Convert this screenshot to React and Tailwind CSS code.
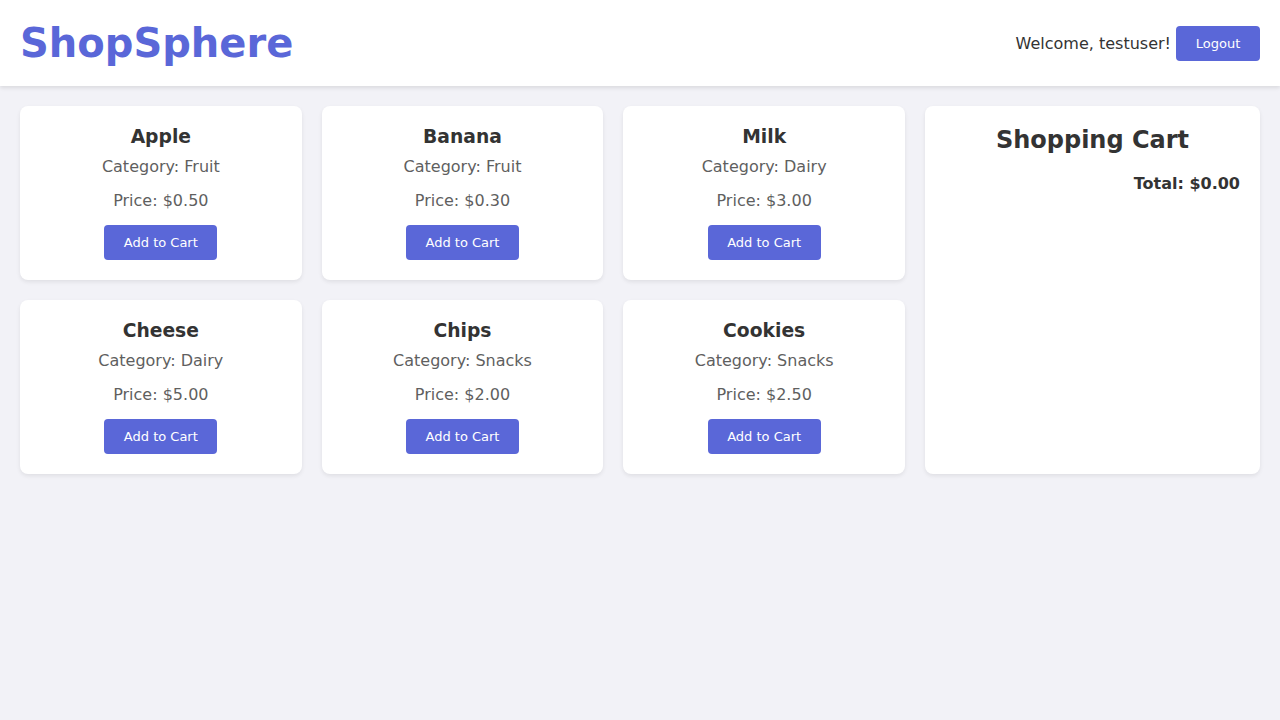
export default function App() {
  const products = [
    { name: "Apple", cat: "Fruit", price: "0.50" },
    { name: "Banana", cat: "Fruit", price: "0.30" },
    { name: "Milk", cat: "Dairy", price: "3.00" },
    { name: "Cheese", cat: "Dairy", price: "5.00" },
    { name: "Chips", cat: "Snacks", price: "2.00" },
    { name: "Cookies", cat: "Snacks", price: "2.50" },
  ];
  return (
    <div className="min-h-[720px] bg-[#f2f2f7] text-[#333]" style={{ fontFamily: '"DejaVu Sans", sans-serif' }}>
      <header className="h-[86px] bg-white flex items-center justify-between px-5 shadow-[0_2px_4px_rgba(0,0,0,0.1)]">
        <h1 className="text-[40px] leading-[48px] font-bold text-[#5a67d8]">ShopSphere</h1>
        <div className="flex items-center gap-[5px]">
          <span className="text-[16px] leading-[20px] pt-[1px]">Welcome, testuser!</span>
          <button className="h-[35px] w-[84px] pt-[2px] rounded-[4px] bg-[#5a67d8] text-white text-[13px]">Logout</button>
        </div>
      </header>
      <main className="flex gap-5 p-5">
        <div className="grid grid-cols-3 gap-5 w-[885px] shrink-0">
          {products.map((p) => (
            <div key={p.name} className="bg-white rounded-[8px] p-5 flex flex-col items-center shadow-[0_2px_4px_rgba(0,0,0,0.08)]">
              <h3 className="mt-[1px] text-[18.72px] leading-[20px] font-bold">{p.name}</h3>
              <p className="mt-[10px] text-[16px] leading-[20px] text-[#5f5f5f]">Category: {p.cat}</p>
              <p className="mt-[14px] text-[16px] leading-[20px] text-[#5f5f5f]">Price: ${p.price}</p>
              <button className="mt-[14px] h-[35px] w-[113px] rounded-[4px] bg-[#5a67d8] text-white text-[13px]">Add to Cart</button>
            </div>
          ))}
        </div>
        <div className="flex-1 bg-white rounded-[8px] p-5 shadow-[0_2px_4px_rgba(0,0,0,0.08)]">
          <h2 className="text-center text-[24px] leading-[28px] font-bold">Shopping Cart</h2>
          <p className="mt-[20px] text-right text-[16px] leading-[20px] font-bold">Total: $0.00</p>
        </div>
      </main>
    </div>
  );
}
